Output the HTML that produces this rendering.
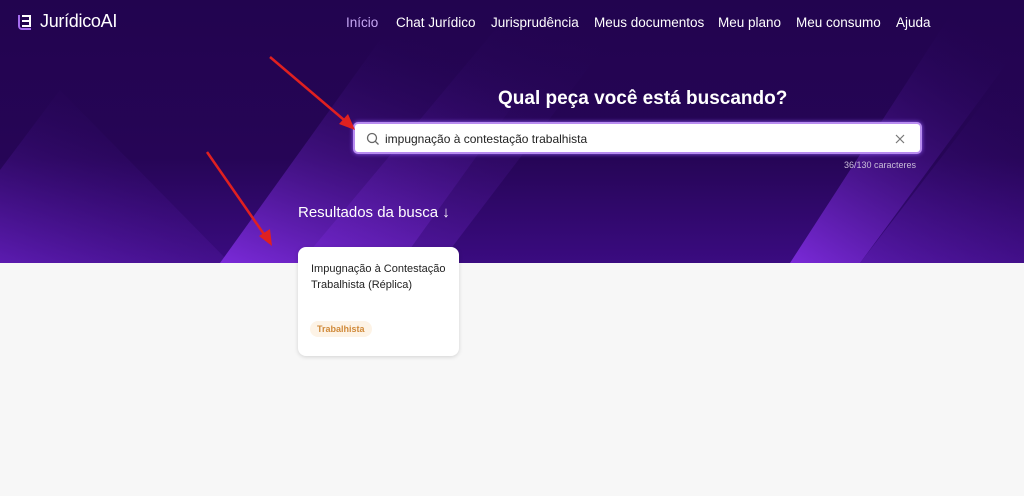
<!DOCTYPE html>
<html><head><meta charset="utf-8"><style>
*{margin:0;padding:0;box-sizing:border-box}
body{width:1024px;height:496px;background:#f7f7f7;font-family:"Liberation Sans",sans-serif;position:relative;overflow:hidden}
.hero{position:absolute;left:0;top:0;width:1024px;height:263px;background:linear-gradient(180deg,#22044f 0%,#260556 60%,#3a0b80 100%);overflow:hidden}
.nav{position:absolute;top:15px;font-size:13.5px;color:#fff}
.logo{position:absolute;left:16px;top:11px;color:#fff;font-size:18px;display:flex;align-items:center;gap:6px;letter-spacing:-0.3px}
h1{position:absolute;left:498px;top:88px;color:#fff;font-size:19px;font-weight:bold}
.search{position:absolute;left:353px;top:122px;width:569px;height:32px;background:#fff;border-radius:5px;border:2px solid #b88cf0;box-shadow:0 0 4px #8e5bf0}
.search span{position:absolute;left:30px;top:8px;font-size:12px;color:#222}
.cnt{position:absolute;left:844px;top:160px;font-size:9px;color:#c8bcd8}
.res{position:absolute;left:298px;top:204px;color:#fff;font-size:15px}
.card{position:absolute;left:298px;top:247px;width:161px;height:109px;background:#fff;border-radius:8px;box-shadow:0 1px 4px rgba(0,0,0,.15)}
.card p{position:absolute;left:13px;top:14px;font-size:11px;line-height:16px;color:#222}
.tag{position:absolute;left:12px;top:74px;background:#fdf3e6;color:#d08a3a;font-size:9px;font-weight:bold;padding:3px 7px;border-radius:8px}
</style></head><body>
<div class="hero">
<svg width="1024" height="263" style="position:absolute;left:0;top:0">
<defs>
<linearGradient id="g1" x1="0" y1="1" x2="0.6" y2="0"><stop offset="0" stop-color="#7a2ad8"/><stop offset="1" stop-color="#2a0660" stop-opacity="0"/></linearGradient>
<linearGradient id="g2" x1="0" y1="1" x2="0.5" y2="0"><stop offset="0" stop-color="#6a22c4"/><stop offset="1" stop-color="#2a0660" stop-opacity="0"/></linearGradient>
</defs>
<polygon points="0,263 0,170 60,90 230,263" fill="url(#g2)" opacity=".7"/>
<polygon points="220,263 380,40 560,40 400,263" fill="url(#g1)"/>
<polygon points="300,263 520,0 640,0 440,263" fill="url(#g1)" opacity=".5"/>
<polygon points="790,263 960,0 1024,0 1024,40 860,263" fill="url(#g1)"/>
<polygon points="860,263 1024,50 1024,263" fill="url(#g2)" opacity=".6"/>
</svg>
<div class="logo"><svg width="18" height="18" viewBox="0 0 18 18"><path d="M3 2v11a3 3 0 0 0 3 3h9" stroke="#a56cf0" stroke-width="2" fill="none"/><path d="M6 3h8v10H6M6 8h7" stroke="#fff" stroke-width="2" fill="none"/></svg>JurídicoAI</div>
<div class="nav" style="left:346px;color:#c6a7f4">Início</div>
<div class="nav" style="left:396px">Chat Jurídico</div>
<div class="nav" style="left:491px">Jurisprudência</div>
<div class="nav" style="left:594px">Meus documentos</div>
<div class="nav" style="left:718px">Meu plano</div>
<div class="nav" style="left:796px">Meu consumo</div>
<div class="nav" style="left:896px">Ajuda</div>
<h1>Qual peça você está buscando?</h1>
<div class="search"><svg width="14" height="14" style="position:absolute;left:11px;top:8px" viewBox="0 0 14 14"><circle cx="6" cy="6" r="4.5" stroke="#666" stroke-width="1.3" fill="none"/><path d="M9.3 9.3L12.5 12.5" stroke="#666" stroke-width="1.3"/></svg><span>impugnação à contestação trabalhista</span><svg width="10" height="10" style="position:absolute;left:540px;top:10px" viewBox="0 0 10 10"><path d="M1 1L9 9M9 1L1 9" stroke="#777" stroke-width="1.2"/></svg></div>
<div class="cnt">36/130 caracteres</div>
<div class="res">Resultados da busca ↓</div>
</div>
<div class="card"><p>Impugnação à Contestação<br>Trabalhista (Réplica)</p><div class="tag">Trabalhista</div></div>
<svg width="1024" height="496" style="position:absolute;left:0;top:0">
<path d="M270 57L350 125" stroke="#e02020" stroke-width="2.5"/><polygon points="355,130 339,124 348,114" fill="#e02020"/>
<path d="M207 152L268 240" stroke="#e02020" stroke-width="2.5"/><polygon points="272,246 259,236 270,229" fill="#e02020"/>
</svg>
</body></html>
